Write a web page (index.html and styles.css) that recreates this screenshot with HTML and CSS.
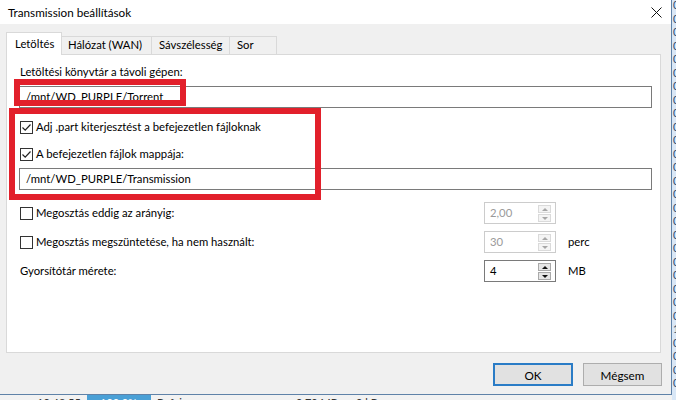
FILE: index.html
```html
<!DOCTYPE html>
<html lang="hu">
<head>
<meta charset="utf-8">
<title>Transmission beállítások</title>
<link rel="stylesheet" href="styles.css">
</head>
<body>
<div class="screen">
  <div class="dialog">
    <div class="titlebar">
      <span class="title">Transmission beállítások</span>
      <svg class="close" viewBox="0 0 11 11" width="11" height="11"><path d="M0.5 0.5L10.5 10.5M10.5 0.5L0.5 10.5" stroke="#111" stroke-width="1" fill="none"/></svg>
    </div>
    <div class="body">
      <div class="tabs">
        <div class="tab active t1">Letöltés</div>
        <div class="tab t2">Hálózat (WAN)</div>
        <div class="tab t3">Sávszélesség</div>
        <div class="tab t4">Sor</div>
      </div>
      <div class="panel">
        <div class="label">Letöltési könyvtár a távoli gépen:</div>
        <div class="input">/mnt/WD_PURPLE/Torrent</div>
        <div class="check first">
          <span class="box"><svg viewBox="0 0 11 11" width="11" height="11"><path d="M1.5 5.5L4.2 8.2L9.5 2.5" stroke="#222" stroke-width="1.2" fill="none"/></svg></span>
          <span>Adj .part kiterjesztést a befejezetlen fájloknak</span>
        </div>
        <div class="check second">
          <span class="box"><svg viewBox="0 0 11 11" width="11" height="11"><path d="M1.5 5.5L4.2 8.2L9.5 2.5" stroke="#222" stroke-width="1.2" fill="none"/></svg></span>
          <span>A befejezetlen fájlok mappája:</span>
        </div>
        <div class="input">/mnt/WD_PURPLE/Transmission</div>
        <div class="opts">
          <div class="check"><span class="box"></span><span>Megosztás eddig az arányig:</span></div>
          <div class="spin disabled"><span class="val">2,00</span><span class="arrows"><span class="arr up"></span><span class="arr down"></span></span></div>
          <div class="unit"></div>

          <div class="check"><span class="box"></span><span>Megosztás megszüntetése, ha nem használt:</span></div>
          <div class="spin disabled"><span class="val">30</span><span class="arrows"><span class="arr up"></span><span class="arr down"></span></span></div>
          <div class="unit">perc</div>

          <div class="plain">Gyorsítótár mérete:</div>
          <div class="spin"><span class="val">4</span><span class="arrows"><span class="arr up"></span><span class="arr down"></span></span></div>
          <div class="unit">MB</div>
        </div>
      </div>
      <div class="buttons">
        <button class="btn ok">OK</button>
        <button class="btn">Mégsem</button>
      </div>
    </div>
  </div>
  <div class="side">0<br>0<br>0<br>0<br>0<br>0<br>0<br>0<br>0<br>0<br>0<br>0<br>0<br>0<br>0<br>0<br>0<br>0<br>0<br>0<br>0<br>0<br>0<br>0<br>1<br>0<br>0<br>0<br>0</div>
  <div class="bottom">
    <span class="c1">10:48:55</span>
    <span class="c2">100,0%</span>
    <span class="c3">Befejezve</span>
    <span class="c4">0,70 MB</span>
    <span class="c5">0 kB</span>
  </div>
  <div class="mark m1"></div>
  <div class="mark m2"></div>
</div>
</body>
</html>
```

FILE: styles.css
```css
* { box-sizing: border-box; }
html, body { margin: 0; padding: 0; }
body {
  width: 676px;
  height: 400px;
  overflow: hidden;
  font-family: Lato, "Noto Sans", "DejaVu Sans", sans-serif;
  font-size: 11.3px;
  color: #000;
  background: #fff;
}
.screen {
  position: relative;
  display: grid;
  grid-template-columns: 672px 4px;
  grid-template-rows: 395px 5px;
  width: 676px;
  height: 400px;
}
.dialog {
  grid-column: 1;
  grid-row: 1;
  display: flex;
  flex-direction: column;
  background: #f0f0f0;
  border-right: 1px solid #5f82a8;
  border-bottom: 1px solid #5f82a8;
}
.titlebar {
  height: 24px;
  flex: none;
  background: #fff;
  display: flex;
  align-items: center;
  justify-content: space-between;
  padding: 0 9px 0 8px;
}
.title { line-height: 16px; font-size: 11.7px; }
.close { display: block; }

.body {
  flex: 1;
  display: flex;
  flex-direction: column;
  padding: 8px 10px 8px 6px;
}
.tabs {
  display: flex;
  align-items: flex-end;
  height: 22px;
  flex: none;
  position: relative;
  z-index: 1;
}
.tab {
  height: 18px;
  line-height: 16px;
  padding: 0 0 0 6px;
  border: 1px solid #d9d9d9;
  border-bottom: none;
  border-left: none;
  background: #f0f0f0;
}
.tab.active {
  height: 23px;
  margin-bottom: -1px;
  background: #fff;
  border-left: 1px solid #d9d9d9;
  padding: 3px 0 0 8px;
  line-height: 16px;
}
.t1 { width: 56px; }
.t2 { width: 90px; }
.t3 { width: 78px; padding-left: 7px; }
.t4 { width: 47px; padding-left: 7px; }
.panel {
  flex: 1;
  background: #fff;
  border: 1px solid #d9d9d9;
  padding: 9px 8px 0 12px;
  display: flex;
  flex-direction: column;
}
.label { line-height: 16px; padding-left: 1px; }
.input {
  margin-top: 6px;
  height: 22px;
  border: 1px solid #7a7a7a;
  padding-left: 6px;
  line-height: 20px;
  background: #fff;
}
.check {
  display: flex;
  align-items: center;
  line-height: 16px;
  padding-left: 1px;
}
.check.first { margin-top: 11px; }
.check.second { margin-top: 11px; }
.box {
  width: 13px;
  height: 13px;
  border: 1px solid #333;
  background: #fff;
  margin-right: 3px;
  flex: none;
  display: flex;
  align-items: center;
  justify-content: center;
}
.box svg { display: block; }
.opts {
  margin-top: 12px;
  display: grid;
  grid-template-columns: 453px 72px auto;
  grid-auto-rows: 22px;
  row-gap: 7px;
  column-gap: 12px;
  align-items: center;
}
.plain { line-height: 16px; padding-left: 1px; }
.unit { line-height: 16px; }
.spin {
  height: 22px;
  border: 1px solid #7a7a7a;
  display: flex;
  align-items: center;
  padding: 1px 4px 1px 5px;
  background: #fff;
}
.spin.disabled { border-color: #cccccc; color: #9a9a9a; }
.val { flex: 1; line-height: 18px; }
.arrows {
  display: flex;
  flex-direction: column;
  width: 13px;
  height: 17px;
  gap: 1px;
}
.arr {
  flex: 1;
  background: #e6e6e6;
  border: 1px solid #a9a9a9;
  position: relative;
}
.spin.disabled .arr { background: #f4f4f4; border-color: #dadada; }
.arr::after {
  content: "";
  position: absolute;
  left: 3px;
  top: 2px;
  border-left: 3px solid transparent;
  border-right: 3px solid transparent;
}
.arr.up::after { border-bottom: 3px solid #111; }
.arr.down::after { border-top: 3px solid #111; top: 2px; }
.spin.disabled .arr.up::after { border-bottom-color: #a6a6a6; }
.spin.disabled .arr.down::after { border-top-color: #a6a6a6; }

.buttons {
  flex: none;
  display: flex;
  justify-content: flex-end;
  gap: 10px;
  margin-top: 10px;
  margin-right: -1px;
}
.btn {
  font: inherit;
  font-size: 11.7px;
  color: #000;
  width: 79px;
  height: 23px;
  background: #e1e1e1;
  border: 1px solid #adadad;
  padding: 0;
  line-height: 20px;
}
.btn.ok {
  width: 80px;
  border: 2px solid #2a7cc6;
}

.side {
  grid-column: 2;
  grid-row: 1 / span 2;
  background: #d9e7f6;
  color: #2c4a6e;
  font-size: 11px;
  line-height: 13.5px;
  padding-left: 1px;
  overflow: hidden;
  margin-top: -2px;
}
.bottom {
  grid-column: 1;
  grid-row: 2;
  display: flex;
  background: #f2f2f2;
  overflow: hidden;
  line-height: 12px;
  font-size: 11px;
  color: #333;
  padding-top: 2px;
}
.bottom span { flex: none; }
.c1 { margin-left: 37px; width: 50px; }
.c2 { width: 64px; background: #4aa0d6; color: #fff; padding-left: 13px; margin-top: -2px; padding-top: 2px; }
.c3 { width: 145px; padding-left: 6px; }
.c4 { width: 60px; }
.c5 { width: 60px; }

.mark {
  position: absolute;
  border: 6px solid #e2202b;
  pointer-events: none;
}
.m1 { left: 14px; top: 79px; width: 172px; height: 27px; }
.m2 { left: 9px; top: 108px; width: 312px; height: 92px; }
```
